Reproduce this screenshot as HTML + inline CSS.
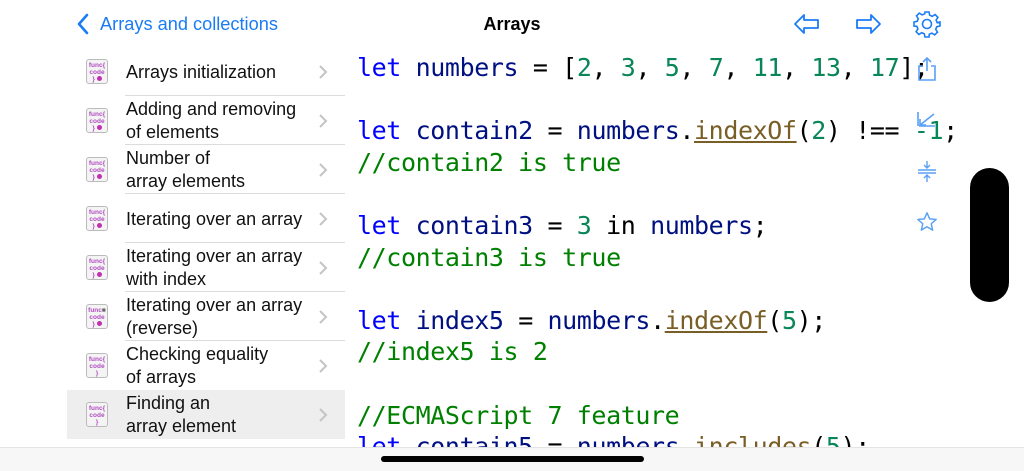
<!DOCTYPE html>
<html><head><meta charset="utf-8"><style>
*{margin:0;padding:0;box-sizing:border-box}
body{width:1024px;height:471px;overflow:hidden;background:#fff;position:relative;font-family:"Liberation Sans",sans-serif}
.nav{position:absolute;top:0;left:0;width:1024px;height:46px}
.back{position:absolute;left:100px;top:14px;font-size:18.2px;color:#1a7cf5}
.title{position:absolute;left:0;width:1024px;text-align:center;top:14px;font-size:18px;font-weight:bold;color:#000}
.row{position:absolute;left:67px;width:278px;height:49px}
.row.sel{background:#eeeeee}
.row .t{position:absolute;left:59px;top:1px;height:48px;display:flex;align-items:center;font-size:18px;line-height:23px;color:#111}
.row .sep{position:absolute;left:58px;right:0;bottom:0;height:1px;background:#dcdcdc}
.row .chev{position:absolute;left:251px;top:17px}
.ic{position:absolute;left:19px;top:12px;width:22px;height:25px;border:1px solid #bbb;border-radius:3px;background:#f4f4f4;font-size:6.5px;line-height:7px;text-align:center;color:#b04cc0;padding-top:2px;font-weight:bold}
.ic i{display:inline-block;width:5px;height:5px;border-radius:50%;background:#c030b0}
.code{position:absolute;left:357px;top:52px;font-family:"DejaVu Sans Mono","Liberation Mono",monospace;font-size:25px;letter-spacing:-0.4px;line-height:31.6px;white-space:pre;color:#001080}
.k{color:#0000ff}.n{color:#098658}.c{color:#008000}.o{color:#000}.f{color:#795e26;text-decoration:underline}
.bot{position:absolute;left:0;top:447px;width:1024px;height:24px;background:#f7f7f7;border-top:1px solid #e4e4e4}
.home{position:absolute;left:381px;top:456px;width:263px;height:6px;border-radius:3px;background:#000}
.scroll{position:absolute;left:970px;top:168px;width:39px;height:134px;border-radius:20px;background:#000}
</style></head><body>
<div class="code"><span class="k">let</span> numbers <span class="o">=</span> <span class="o">[</span><span class="n">2</span><span class="o">,</span> <span class="n">3</span><span class="o">,</span> <span class="n">5</span><span class="o">,</span> <span class="n">7</span><span class="o">,</span> <span class="n">11</span><span class="o">,</span> <span class="n">13</span><span class="o">,</span> <span class="n">17</span><span class="o">];</span>

<span class="k">let</span> contain2 <span class="o">=</span> numbers<span class="o">.</span><span class="f">indexOf</span><span class="o">(</span><span class="n">2</span><span class="o">) !== </span><span class="n">-1</span><span class="o">;</span>
<span class="c">//contain2 is true</span>

<span class="k">let</span> contain3 <span class="o">=</span> <span class="n">3</span> <span class="o">in</span> numbers<span class="o">;</span>
<span class="c">//contain3 is true</span>

<span class="k">let</span> index5 <span class="o">=</span> numbers<span class="o">.</span><span class="f">indexOf</span><span class="o">(</span><span class="n">5</span><span class="o">);</span>
<span class="c">//index5 is 2</span>

<span class="c">//ECMAScript 7 feature</span>
<span class="k">let</span> contain5 <span class="o">=</span> numbers<span class="o">.</span><span class="f">includes</span><span class="o">(</span><span class="n">5</span><span class="o">);</span></div>

<div class="nav">
<svg style="position:absolute;left:76px;top:13px" width="14" height="22" viewBox="0 0 14 22"><path d="M11 2 L3 11 L11 20" fill="none" stroke="#1a7cf5" stroke-width="2.6" stroke-linecap="round" stroke-linejoin="round"/></svg>
<div class="back">Arrays and collections</div>
<div class="title">Arrays</div>
<svg style="position:absolute;left:793px;top:12px" width="28" height="24" viewBox="0 0 28 24"><path d="M2 12 L11 3 V8 H25 V16 H11 V21 Z" fill="none" stroke="#1a7cf5" stroke-width="1.8" stroke-linejoin="round"/></svg>
<svg style="position:absolute;left:854px;top:12px" width="28" height="24" viewBox="0 0 28 24"><path d="M26 12 L17 3 V8 H3 V16 H17 V21 Z" fill="none" stroke="#1a7cf5" stroke-width="1.8" stroke-linejoin="round"/></svg>
<svg style="position:absolute;left:913px;top:10px" width="28" height="28" viewBox="0 0 28 28"><g fill="none" stroke="#1a7cf5" stroke-width="1.6"><circle cx="14" cy="14" r="4.5"/><path d="M12 2h4l.7 3.2 2.6 1.1 2.8-1.8 2.8 2.8-1.8 2.8 1.1 2.6L27 12v4l-3.2.7-1.1 2.6 1.8 2.8-2.8 2.8-2.8-1.8-2.6 1.1L16 27h-4l-.7-3.2-2.6-1.1-2.8 1.8-2.8-2.8 1.8-2.8-1.1-2.6L1 16v-4l3.2-.7 1.1-2.6-1.8-2.8 2.8-2.8 2.8 1.8 2.6-1.1z"/></g></svg>
</div>

<svg style="position:absolute;left:915px;top:56px" width="24" height="26" viewBox="0 0 24 26"><g fill="none" stroke="#5aa0f5" stroke-width="1.6"><path d="M12 2v13M8 6l4-4 4 4"/><path d="M8 10H4v14h16V10h-4"/></g></svg>
<svg style="position:absolute;left:915px;top:110px" width="24" height="24" viewBox="0 0 24 24"><g fill="none" stroke="#5aa0f5" stroke-width="1.6"><path d="M3 2v14M19 4L5 15M5 9v6h6M4 16h16"/></g></svg>
<svg style="position:absolute;left:916px;top:160px" width="22" height="24" viewBox="0 0 22 24"><g fill="none" stroke="#5aa0f5" stroke-width="1.4"><path d="M11 1v7M8 5l3 3 3-3M2 10h18M2 13h18M11 22v-7M8 18l3-3 3 3"/></g></svg>
<svg style="position:absolute;left:916px;top:211px" width="22" height="22" viewBox="0 0 24 24"><path d="M12 2l2.9 6.6 7.1.6-5.4 4.7 1.6 7-6.2-3.7-6.2 3.7 1.6-7L2 9.2l7.1-.6z" fill="none" stroke="#5aa0f5" stroke-width="1.6" stroke-linejoin="round"/></svg>
<div class="scroll"></div>

<div class="row" style="top:47px"><div class="ic">func{<br>code<br>} <i></i></div><div class="t">Arrays initialization</div><svg class="chev" width="10" height="16"><path d="M2 2l6 6-6 6" fill="none" stroke="#c4c4c6" stroke-width="2"/></svg><div class="sep"></div></div>
<div class="row" style="top:96px"><div class="ic">func{<br>code<br>} <i></i></div><div class="t">Adding and removing<br>of elements</div><svg class="chev" width="10" height="16"><path d="M2 2l6 6-6 6" fill="none" stroke="#c4c4c6" stroke-width="2"/></svg><div class="sep"></div></div>
<div class="row" style="top:145px"><div class="ic">func{<br>code<br>} <i></i></div><div class="t">Number of<br>array elements</div><svg class="chev" width="10" height="16"><path d="M2 2l6 6-6 6" fill="none" stroke="#c4c4c6" stroke-width="2"/></svg><div class="sep"></div></div>
<div class="row" style="top:194px"><div class="ic">func{<br>code<br>} <i></i></div><div class="t">Iterating over an array</div><svg class="chev" width="10" height="16"><path d="M2 2l6 6-6 6" fill="none" stroke="#c4c4c6" stroke-width="2"/></svg><div class="sep"></div></div>
<div class="row" style="top:243px"><div class="ic">func{<br>code<br>} <i></i></div><div class="t">Iterating over an array<br>with index</div><svg class="chev" width="10" height="16"><path d="M2 2l6 6-6 6" fill="none" stroke="#c4c4c6" stroke-width="2"/></svg><div class="sep"></div></div>
<div class="row" style="top:292px"><div class="ic">func<span style="color:#666">&#9632;</span><br>code<br>} <i></i></div><div class="t">Iterating over an array<br>(reverse)</div><svg class="chev" width="10" height="16"><path d="M2 2l6 6-6 6" fill="none" stroke="#c4c4c6" stroke-width="2"/></svg><div class="sep"></div></div>
<div class="row" style="top:341px"><div class="ic">func{<br>code<br>}</div><div class="t">Checking equality<br>of arrays</div><svg class="chev" width="10" height="16"><path d="M2 2l6 6-6 6" fill="none" stroke="#c4c4c6" stroke-width="2"/></svg></div>
<div class="row sel" style="top:390px"><div class="ic">func{<br>code<br>}</div><div class="t">Finding an<br>array element</div><svg class="chev" width="10" height="16"><path d="M2 2l6 6-6 6" fill="none" stroke="#c4c4c6" stroke-width="2"/></svg></div>

<div class="bot"></div>
<div class="home"></div>
</body></html>
